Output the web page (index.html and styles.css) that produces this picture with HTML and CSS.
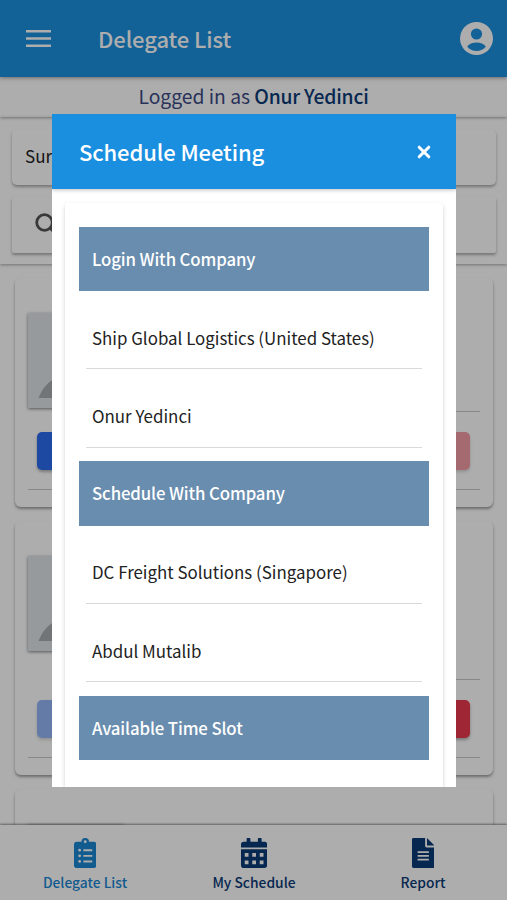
FILE: index.html
```html
<!DOCTYPE html>
<html lang="en">
<head>
    <meta charset="UTF-8">
    <meta name="viewport" content="width=device-width, initial-scale=1.0">
    <title>Delegate List</title>
    <link rel="stylesheet" href="styles.css">
</head>
<body>
    <div class="app">
        <header class="toolbar">
            <svg class="menu-icon" viewBox="0 0 25 17"><path d="M0 1.3h25M0 8.5h25M0 15.7h25" stroke="#fff" stroke-width="2.6"/></svg>
            <h1 class="toolbar-title">Delegate List</h1>
            <svg class="user-icon" viewBox="0 0 33 33">
                <circle cx="16.5" cy="16.5" r="16.5" fill="#fff"/>
                <circle cx="16.5" cy="12" r="5.6" fill="#1b8fdf"/>
                <path d="M7.2 24.5c1.8-2.8 5.6-4 9.3-4s7.5 1.2 9.3 4c-2 2.8-5.4 4.6-9.3 4.600s-7.300-1.800-9.300-4.600z" fill="#1b8fdf"/>
            </svg>
        </header>

        <div class="logged-in">Logged in as <b>Onur Yedinci</b></div>

        <section class="filters">
            <div class="field">Sur</div>
            <div class="field search">
                <svg class="search-icon" viewBox="0 0 26 26" fill="none" stroke="#555" stroke-width="2.8"><circle cx="9.5" cy="9.5" r="7.8"/><path d="M15.5 15.500l8 8"/></svg>
            </div>
        </section>

        <!-- Delegates -->
        <main class="list">
            <article class="card">
                <div class="card-top">
                    <div class="photo"><svg viewBox="0 0 95 95"><circle cx="47" cy="36" r="18"/><path d="M10.5 85q9-24 36.500-24t36.500 24z"/></svg></div>
                    <div class="details"></div>
                </div>
                <div class="actions"><span class="btn blue"></span><span class="btn red faded"></span></div>
            </article>
            <article class="card tall">
                <div class="card-top">
                    <div class="photo"><svg viewBox="0 0 95 95"><circle cx="47" cy="36" r="18"/><path d="M10.5 85q9-24 36.500-24t36.500 24z"/></svg></div>
                    <div class="details"></div>
                </div>
                <div class="actions"><span class="btn blue faded"></span><span class="btn red"></span></div>
            </article>
            <article class="card">
                <div class="card-top">
                    <div class="photo"></div>
                    <div class="details"></div>
                </div>
            </article>
        </main>

        <nav class="tabs">
            <a class="tab active">
                <svg class="tab-icon" viewBox="0 0 384 512" fill="currentColor" fill-rule="evenodd"><path d="M336 64h-80a64 64 0 0 0-128 0H48a48 48 0 0 0-48 48v352a48 48 0 0 0 48 48h288a48 48 0 0 0 48-48V112a48 48 0 0 0-48-48zM192 40a24 24 0 1 1 0 48 24 24 0 0 1 0-48zM96 424a24 24 0 1 1 0-48 24 24 0 0 1 0 48zm0-96a24 24 0 1 1 0-48 24 24 0 0 1 0 48zm0-96a24 24 0 1 1 0-48 24 24 0 0 1 0 48zm64-40h152v32H160zm0 96h152v32H160zm0 96h152v32H160z"/></svg>
                <span>Delegate List</span>
            </a>
            <a class="tab">
                <svg class="tab-icon" viewBox="0 0 448 512" fill="currentColor" fill-rule="evenodd"><path d="M0 192v272a48 48 0 0 0 48 48h352a48 48 0 0 0 48-48V192zm64 64h64v64H64zm128 0h64v64h-64zm128 0h64v64h-64zM64 384h64v64H64zm128 0h64v64h-64zm128 0h64v64h-64zM0 160v-48a48 48 0 0 1 48-48h48V12a12 12 0 0 1 12-12h40a12 12 0 0 1 12 12v52h128V12a12 12 0 0 1 12-12h40a12 12 0 0 1 12 12v52h48a48 48 0 0 1 48 48v48z"/></svg>
                <span>My Schedule</span>
            </a>
            <a class="tab">
                <svg class="tab-icon" viewBox="0 0 384 512" fill="currentColor" fill-rule="evenodd"><path d="M224 136V0H24A24 24 0 0 0 0 24v464a24 24 0 0 0 24 24h336a24 24 0 0 0 24-24V160H248a24 24 0 0 1-24-24zM96 224h192v30H96zm0 64h192v30H96zm0 64h192v30H96zM256 0v128h128z"/></svg>
                <span>Report</span>
            </a>
        </nav>
    </div>

    <div class="overlay">
        <div class="modal">
            <div class="modal-header">
                <h2 class="modal-title">Schedule Meeting</h2>
                <svg class="close-icon" viewBox="0 0 14 14"><path d="M2.2 2.200l9.600 9.600M11.800 2.200l-9.600 9.600" stroke="#fff" stroke-width="3" stroke-linecap="round"/></svg>
            </div>
            <div class="modal-body">
                <div class="panel">
                    <h3 class="row heading">Login With Company</h3>
                    <div class="row item">Ship Global Logistics (United States)</div>
                    <div class="row item">Onur Yedinci</div>
                    <h3 class="row heading">Schedule With Company</h3>
                    <div class="row item">DC Freight Solutions (Singapore)</div>
                    <div class="row item">Abdul Mutalib</div>
                    <h3 class="row heading">Available Time Slot</h3>
                </div>
            </div>
        </div>
    </div>
</body>
</html>
```
FILE: styles.css
```css
* {
    margin: 0;
    padding: 0;
    box-sizing: border-box;
}

body {
    height: 100vh;
    overflow: hidden;
    background: #fff;
    font-family: 'Noto Sans CJK SC', 'Open Sans', sans-serif;
    color: #222;
}

svg {
    display: block;
    flex-shrink: 0;
}

.app {
    height: 100vh;
    display: flex;
    flex-direction: column;
}

/* Top bar */
.toolbar {
    height: 77px;
    flex-shrink: 0;
    display: flex;
    align-items: center;
    padding: 0 14px 0 26px;
    background: #1b8fdf;
    box-shadow: 0 1px 4px rgba(0, 0, 0, 0.4);
    z-index: 2;
}

.menu-icon {
    width: 25px;
    height: 17px;
}

.toolbar-title {
    flex: 1;
    margin: -2px 0 0 47px;
    font-size: 22px;
    line-height: 30px;
    font-weight: 500;
    letter-spacing: -0.1px;
    color: #fff;
}

.user-icon {
    width: 33px;
    height: 33px;
}

.logged-in {
    height: 40px;
    flex-shrink: 0;
    text-align: center;
    font-size: 19.3px;
    line-height: 39px;
    color: #3c4a85;
    box-shadow: 0 1px 3px rgba(0, 0, 0, 0.35);
    z-index: 1;
}

.logged-in b {
    font-weight: 500;
    letter-spacing: -0.2px;
    color: #0a3a76;
}

/* Filters */
.filters {
    height: 147px;
    flex-shrink: 0;
    display: flex;
    flex-direction: column;
    gap: 12px;
    padding: 12px 11px 0 12px;
    box-shadow: 0 1px 3px rgba(0, 0, 0, 0.35);
}

.field {
    height: 56px;
    padding-left: 13px;
    border-radius: 5px;
    font-size: 17px;
    line-height: 54px;
    box-shadow: 0 2px 3px rgba(0, 0, 0, 0.32);
}

.search {
    display: flex;
    align-items: center;
    padding-left: 23px;
    border-radius: 2px;
}

.search-icon {
    width: 26px;
    height: 26px;
    margin-top: 2px;
}

/* Delegate cards */
.list {
    flex: 1;
    min-height: 0;
    overflow: hidden;
    display: flex;
    flex-direction: column;
    gap: 14px;
    padding: 14px 14px 0 15px;
}

.card {
    height: 229px;
    flex-shrink: 0;
    padding: 0 13px;
    border-radius: 6px;
    box-shadow: 0 2px 3px rgba(0, 0, 0, 0.38);
}

.card.tall {
    height: 254px;
}

.card-top {
    height: 134px;
    display: flex;
    gap: 14px;
    padding-top: 35px;
}

.tall .card-top {
    height: 159px;
}

.photo {
    width: 95px;
    height: 95px;
    background: #dfe3e6;
    box-shadow: 0 1px 3px rgba(0, 0, 0, 0.5);
}

.photo svg {
    width: 95px;
    height: 95px;
    fill: #a9adb0;
}

.details {
    flex: 1;
    border-bottom: 1px solid #c9c9c9;
}

.actions {
    height: 78px;
    display: flex;
    align-items: center;
    justify-content: space-between;
    padding: 0 10px 0 9px;
    border-bottom: 1px solid #c9c9c9;
}

.btn {
    width: 110px;
    height: 38px;
    border-radius: 5px;
    box-shadow: 0 2px 3px rgba(0, 0, 0, 0.3);
}

.blue {
    background: #2c6cf0;
}

.red {
    background: #eb3a4f;
}

.faded {
    opacity: 0.5;
}

/* Bottom tabs */
.tabs {
    height: 75px;
    flex-shrink: 0;
    display: flex;
    background: #fff;
    box-shadow: 0 -1px 2px rgba(0, 0, 0, 0.45);
    z-index: 1;
}

.tab {
    flex: 1;
    display: flex;
    flex-direction: column;
    align-items: center;
    gap: 4px;
    padding: 13px 0 0 1px;
    font-size: 13.8px;
    line-height: 20px;
    font-weight: 500;
    color: #0a3a76;
}

.tab.active {
    color: #1b87d3;
}

.tab-icon {
    height: 30px;
}

/* Schedule dialog */
.overlay {
    position: fixed;
    inset: 0;
    z-index: 10;
    padding: 114px 51px 113px 52px;
    background: rgba(0, 0, 0, 0.32);
}

.modal {
    height: 673px;
    overflow: hidden;
    display: flex;
    flex-direction: column;
    background: #fff;
}

.modal-header {
    height: 75px;
    flex-shrink: 0;
    display: flex;
    align-items: center;
    justify-content: space-between;
    padding: 0 25px 0 27px;
    background: #1b8fdf;
    box-shadow: 0 1px 4px rgba(0, 0, 0, 0.25);
}

.modal-title {
    margin-top: -2px;
    font-size: 22px;
    line-height: 30px;
    font-weight: 500;
    letter-spacing: -0.1px;
    color: #fff;
}

.close-icon {
    width: 14px;
    height: 14px;
}

.modal-body {
    flex: 1;
    min-height: 0;
    padding: 14px 13px 0;
}

.panel {
    height: 640px;
    display: flex;
    flex-direction: column;
    gap: 13.6px;
    padding: 23.6px 14px 0;
    border-radius: 4px;
    box-shadow: 0 2px 4px rgba(0, 0, 0, 0.18);
}

.row {
    height: 64.6px;
    flex-shrink: 0;
    font-size: 16.9px;
    line-height: 65px;
}

.heading {
    padding-left: 13px;
    font-size: 16.8px;
    font-weight: 500;
    letter-spacing: -0.12px;
    color: #fff;
    background: #698dae;
}

.item {
    margin: 0 7px;
    padding-left: 6px;
    border-bottom: 1px solid #d9d9d9;
}
```
